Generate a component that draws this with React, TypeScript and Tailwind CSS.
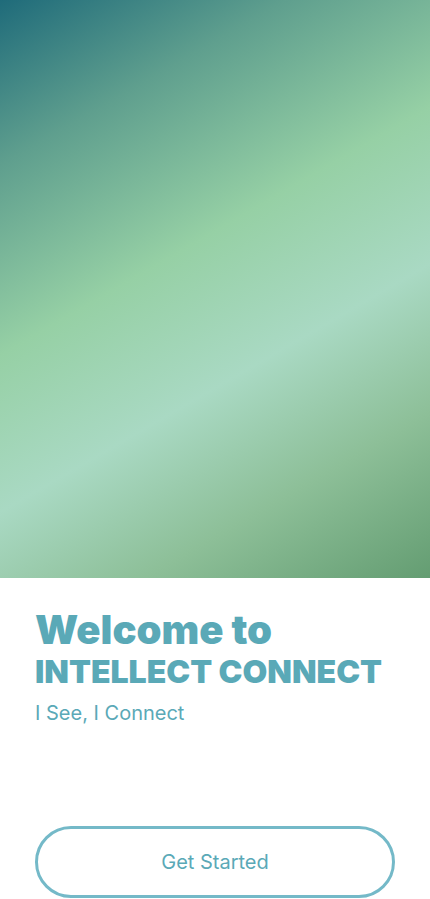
export default function App() {
  return (
    <main
      className="flex min-h-[899px] w-full flex-col bg-white"
      style={{ fontFamily: "Inter, 'Noto Sans', sans-serif" }}
    >
      <div className="h-[578px] w-full bg-[linear-gradient(150deg,#1f6b7a_0%,#5f9f8e_20%,#96d0a5_43%,#a9d9c3_62%,#8dbf98_80%,#649d72_100%)]" />

      <section className="flex flex-1 flex-col px-[35px]">
        <h1 className="mt-[29px] text-[40px] font-black leading-[46px] text-[#5aa9b7]">
          Welcome to
        </h1>
        <h2 className="text-[32px] font-black leading-[37px] text-[#5aa9b7]">
          INTELLECT CONNECT
        </h2>
        <p className="mt-[11px] text-[20px] leading-[24px] text-[#5aa9b7]">
          I See, I Connect
        </p>

        <button className="mt-[101px] flex h-[72px] w-full items-center justify-center rounded-full border-[3px] border-[#74b9c8] bg-white text-[20px] text-[#5aa9b7]">
          Get Started
        </button>
      </section>
    </main>
  );
}
